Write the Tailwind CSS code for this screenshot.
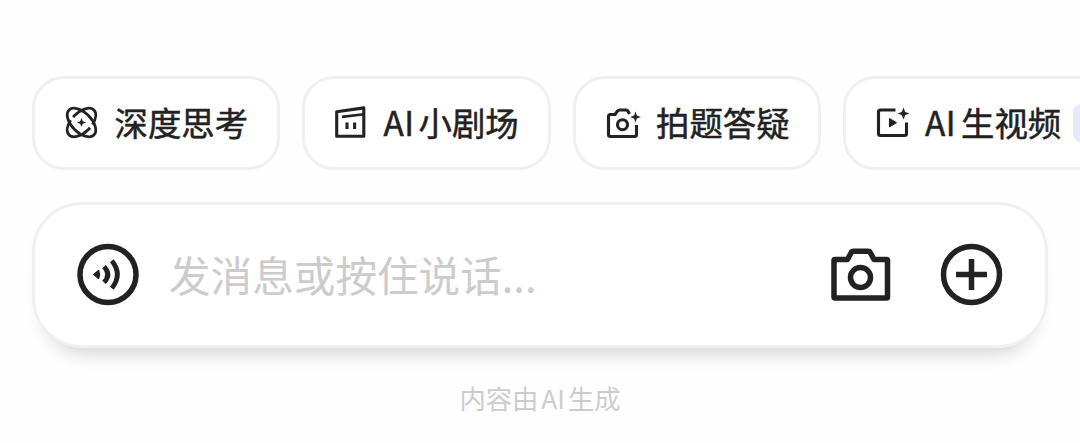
<!DOCTYPE html>
<html lang="zh-CN">
<head>
    <meta charset="UTF-8">
    <meta name="viewport" content="width=device-width, initial-scale=1.0">
    <title>AI 对话</title>
    <script src="https://cdn.jsdelivr.net/npm/@tailwindcss/browser@4"></script>
</head>
<body class="h-[443px] overflow-hidden bg-[#fefefe] font-['Noto_Sans_CJK_SC',sans-serif] text-[#222]">
    <nav class="flex gap-[22px] overflow-hidden pt-[76px] pl-[32px] text-[33.4px] leading-none font-normal whitespace-nowrap [-webkit-text-stroke:0.5px_#222]">
        <button class="flex h-[94px] w-[247.5px] shrink-0 items-center rounded-[32px] border-3 border-[#f0f0f0] bg-white pl-[29px]">
            <svg class="size-9 shrink-0" viewBox="0 0 36 36" fill="none" stroke="currentColor" stroke-width="2.8">
                <ellipse cx="17.5" cy="17.5" rx="17.6" ry="9.8" transform="rotate(-45 17.5 17.5)" stroke-dasharray="15.5 4 24.3 0"/>
                <ellipse cx="17.5" cy="17.5" rx="17.6" ry="9.8" transform="rotate(45 17.5 17.5)"/>
                <path d="M17.5 13 18.8 16.2 22 17.5 18.8 18.8 17.5 22 16.2 18.8 13 17.5 16.2 16.2Z" fill="currentColor" stroke="none"/>
            </svg>
            <span class="mb-0.5 ml-[14.5px]">深度思考</span>
        </button>
        <button class="flex h-[94px] w-[249.5px] shrink-0 items-center rounded-[32px] border-3 border-[#f0f0f0] bg-white pl-[28px]">
            <svg class="size-9 shrink-0" viewBox="0 0 36 36" fill="none" stroke="currentColor" stroke-width="3.1" stroke-linejoin="round">
                <path d="M3.7 6.7 30.8 2.9V31.3H3.7Z"/>
                <path d="M9 11.9 30.8 9.3" stroke-width="2.6"/>
                <path d="M14 17.5v6.5M21.6 17.5v6.5"/>
            </svg>
            <span class="mb-0.5 ml-[15px] tracking-[0.5px]">AI</span><span class="mb-0.5 ml-[4px]">小剧场</span>
        </button>
        <button class="flex h-[94px] w-[248px] shrink-0 items-center rounded-[32px] border-3 border-[#f0f0f0] bg-white pl-[29px]">
            <svg class="size-9 shrink-0" viewBox="0 0 36 36" fill="none" stroke="currentColor" stroke-width="3.1" stroke-linejoin="round">
                <path d="M24.5 9 23 6.2Q22.3 5 21 5H14.5Q13.2 5 12.4 6.1L10 9.5H5.5Q3.5 9.5 3.5 11.5V29.5Q3.5 31.5 5.5 31.5H29.5Q31.500 31.500 31.500 29.500V20"/>
                <circle cx="17.5" cy="19.7" r="5"/>
                <path d="M30.5 6.5 31.900 10.600 35.800 12 31.900 13.400 30.500 17.500 29.100 13.400 25.200 12 29.100 10.600Z" fill="currentColor" stroke="none"/>
            </svg>
            <span class="mb-0.5 ml-[15px]">拍题答疑</span>
        </button>
        <button class="flex h-[94px] w-[320px] shrink-0 items-center rounded-[32px] border-3 border-[#f0f0f0] bg-white pl-[28.5px]">
            <svg class="size-9 shrink-0" viewBox="0 0 36 36" fill="none" stroke="currentColor" stroke-width="3.1">
                <path d="M20.500 5H5.500Q3.500 5 3.500 7V28.500Q3.500 30.500 5.500 30.500H29.500Q31.500 30.500 31.500 28.500V17.500"/>
                <path d="M14.500 13.500 21.500 17.700 14.500 21.900Z" fill="currentColor" stroke-width="1" stroke-linejoin="round"/>
                <path d="M28.500 2.500 30.200 6.900 34.500 8.500 30.200 10.100 28.500 14.500 26.800 10.100 22.500 8.500 26.800 6.900Z" fill="currentColor" stroke="none"/>
            </svg>
            <span class="mb-0.5 ml-[14.5px] tracking-[0.5px]">AI</span><span class="mb-0.5 ml-[5px]">生视频</span>
            <span class="ml-[12px] h-[38px] w-20 rounded-lg bg-[#e6e8fc]"></span>
        </button>
    </nav>

    <main class="mt-[32px] ml-[32px] flex h-[146px] w-[1016px] items-center rounded-[50px] border-3 border-[#f0f0f0] bg-white pl-[42px] shadow-[0_22px_20px_-18px_rgba(0,0,0,0.16),0_8px_24px_-6px_rgba(0,0,0,0.04)]">
        <svg class="size-16 shrink-0" viewBox="0 0 64 64" fill="none" stroke="#222" stroke-width="5.5">
            <circle cx="31" cy="31.5" r="28"/>
            <path d="M16.8 31.5 21.6 27.7Q23.2 31.5 21.6 35.3Z" fill="#222" stroke-width="1.5" stroke-linejoin="round"/>
            <path d="M27 23.6Q34.6 31.5 27 39.4M34.8 17.8Q46 31.5 34.8 45.2" stroke-width="4.8"/>
        </svg>
        <p class="mb-px ml-[28px] grow text-[41.6px] leading-none font-normal text-[#ccc]">发消息或按住说话...</p>
        <svg class="size-16 shrink-0" viewBox="0 0 64 64" fill="none" stroke="#222" stroke-width="5.5" stroke-linejoin="round">
            <path d="M5 16.5H17.500L21 10Q21.800 8.300 23.500 8.300H38Q39.700 8.300 40.500 10L44 16.500H56.500Q57.500 16.500 57.500 17.500V54Q57.500 55 56.500 55H5Q4 55 4 54V17.500Q4 16.500 5 16.500Z"/>
            <circle cx="30.500" cy="34.500" r="10"/>
        </svg>
        <svg class="mr-[41px] ml-[46px] size-16 shrink-0" viewBox="0 0 64 64" fill="none" stroke="#222" stroke-width="5.5">
            <circle cx="31.5" cy="31.5" r="28"/>
            <path d="M31.5 16V47M16 31.5H47"/>
        </svg>
    </main>

    <p class="mt-[37px] flex justify-center text-[26.3px] leading-none font-normal text-[#ccc]"><span>内容由</span><span class="ml-[3px]">AI</span><span class="ml-[3px]">生成</span></p>
</body>
</html>
